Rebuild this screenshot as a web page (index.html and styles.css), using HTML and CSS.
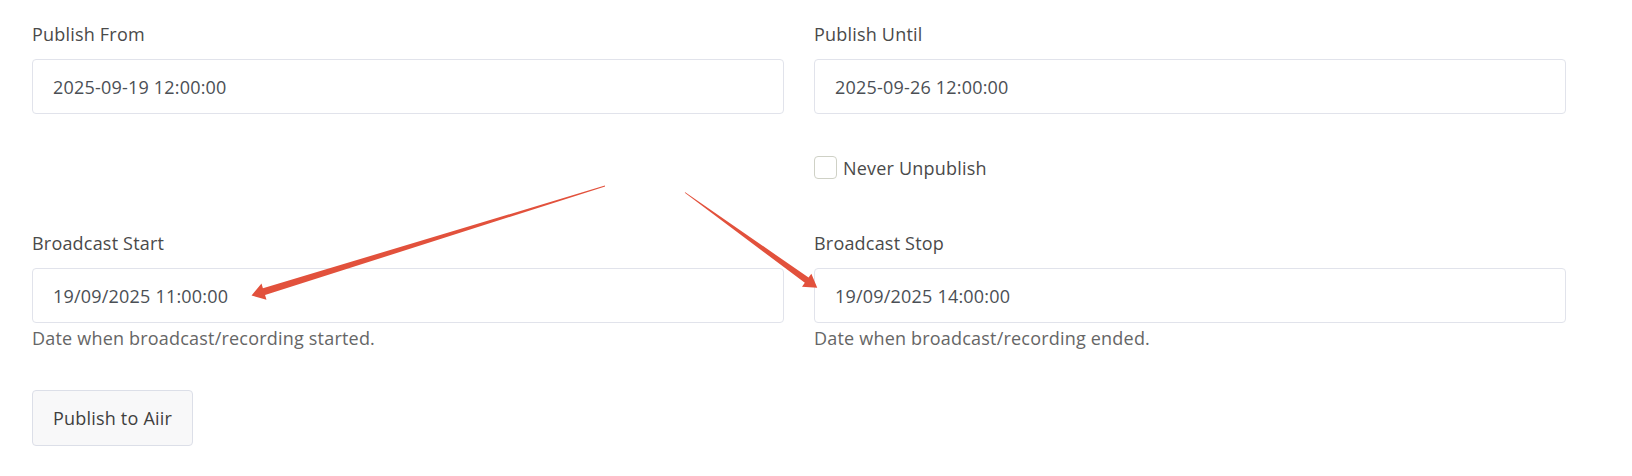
FILE: index.html
```html
<!DOCTYPE html>
<html lang="en">
<head>
<meta charset="utf-8">
<title>Publish</title>
<link rel="stylesheet" href="styles.css">
</head>
<body>
<form class="form">
  <div class="row row-publish">
    <div class="field">
      <label class="label">Publish From</label>
      <div class="input">2025-09-19 12:00:00</div>
    </div>
    <div class="field">
      <label class="label">Publish Until</label>
      <div class="input">2025-09-26 12:00:00</div>
    </div>
  </div>
  <div class="row row-check">
    <div></div>
    <label class="check"><span class="box"></span><span class="check-text">Never Unpublish</span></label>
  </div>
  <div class="row row-broadcast">
    <div class="field">
      <label class="label">Broadcast Start</label>
      <div class="input">19/09/2025 11:00:00</div>
      <div class="help">Date when broadcast/recording started.</div>
    </div>
    <div class="field">
      <label class="label">Broadcast Stop</label>
      <div class="input">19/09/2025 14:00:00</div>
      <div class="help">Date when broadcast/recording ended.</div>
    </div>
  </div>
  <div class="actions">
    <button type="button" class="btn">Publish to Aiir</button>
  </div>
</form>
<svg class="annotations" width="1632" height="476" viewBox="0 0 1632 476">
  <polygon fill="#e2513c" transform="translate(605 186) rotate(162.79)" points="0,-0.4 357,-3.6 357,-8.5 370,0 357,8.5 357,3.6 0,0.4"/>
  <polygon fill="#e2513c" transform="translate(685 192.5) rotate(35.78)" points="0,-0.4 150,-3.2 150,-8 163,0 150,8 150,3.2 0,0.4"/>
</svg>
</body>
</html>
```
FILE: styles.css
```css
* { box-sizing: border-box; }
html, body { margin: 0; padding: 0; background: #fff; }
body {
  position: relative;
  width: 1632px;
  height: 476px;
  overflow: hidden;
  font-family: "Open Sans", "Noto Sans", sans-serif;
  font-size: 18px;
  letter-spacing: 0.2px;
  color: #4a4a4a;
}
.form { padding: 22px 32px 0; }
.row {
  display: grid;
  grid-template-columns: 752px 752px;
  column-gap: 30px;
}
.row-publish { margin-bottom: 44px; }
.row-check { margin-bottom: 52px; }
.label {
  display: block;
  line-height: 24px;
  margin-bottom: 13px;
  color: #4a4a4a;
}
.input {
  height: 55px;
  border: 1px solid #e1e3eb;
  border-radius: 4px;
  padding: 0 20px;
  display: flex;
  align-items: center;
  color: #4b4f55;
  background: #fff;
}
.help {
  line-height: 24px;
  margin-top: 3px;
  color: #666;
}
.check {
  display: flex;
  align-items: center;
  gap: 6px;
  height: 23px;
  margin-top: -2px;
}
.box {
  width: 23px;
  height: 23px;
  border: 1px solid #cfd1c6;
  border-radius: 4px;
  background: #fff;
}
.check-text { color: #4a4a4a; }
.actions { margin-top: 40px; }
.btn {
  font: inherit;
  letter-spacing: inherit;
  color: #3f3f3f;
  height: 56px;
  padding: 0 20px;
  border: 1px solid #dcdfe8;
  border-radius: 4px;
  background: #f8f8f9;
}
.annotations {
  position: absolute;
  top: 0;
  left: 0;
  pointer-events: none;
}
```
